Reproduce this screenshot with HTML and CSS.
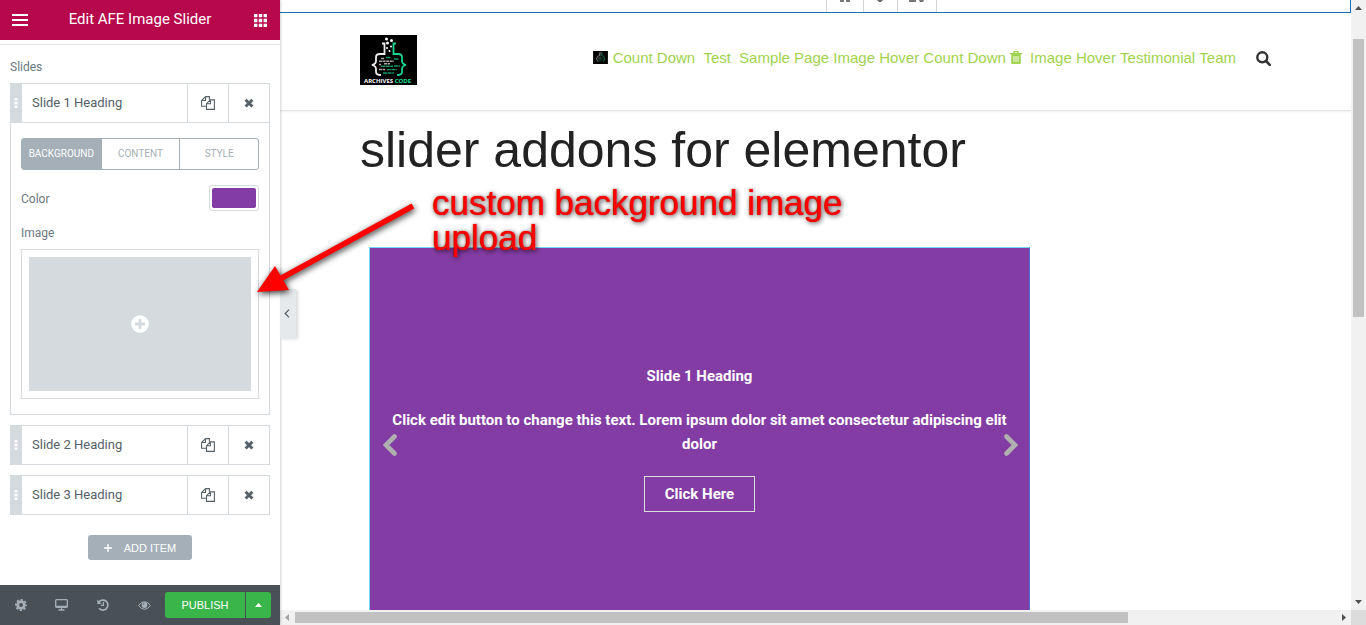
FILE: index.html
```html
<!DOCTYPE html>
<html lang="en">
<head>
<meta charset="utf-8">
<title>Edit AFE Image Slider</title>
<link rel="stylesheet" href="styles.css">
</head>
<body>
<svg class="symbols" aria-hidden="true">
  <symbol id="i-copy" viewBox="0 0 14 14"><path d="M4.500 .6h3.900v3.200M4.500 .6L.6 4.500v5.700h4.900M4.500 .6v3.900H.6M9.400 3.900h4v9.500H5.500V7.700zM9.400 3.900v3.800H5.500" fill="none" stroke="currentColor" stroke-width="1.100"/></symbol>
  <symbol id="i-close" viewBox="0 0 10 10"><path d="M1.600 1.700l6.800 6.800M8.400 1.700L1.600 8.500" stroke="currentColor" stroke-width="3"/></symbol>
  <symbol id="i-logo" viewBox="0 0 57 50">
    <rect width="57" height="50" fill="#000"/>
    <g fill="#fff"><circle cx="26.500" cy="4" r="1.500"/><circle cx="31.500" cy="5.500" r="1.500"/><circle cx="27.500" cy="8" r="1.500"/><circle cx="27" cy="13" r="1"/><circle cx="31" cy="11.500" r="1"/><circle cx="29.500" cy="16" r="1"/></g>
    <g fill="none" stroke-width="1.800">
      <path d="M22 8.500h2.500V19H20q-4 0-4 3v4q0 3-4 4 4 1 4 4v3q0 3 5 3" stroke="#eee"/>
      <path d="M36 8.500h-2.500V19H38q4 0 4 3v4q0 3 4 4-4 1-4 4v3q0 3-5 3" stroke="#18d492"/>
    </g>
    <g fill="none" stroke-width="1.400"><path d="M21 23.500h3M19 26.300h15M19 29.500h2M24 28.700h6M19 34.500h6" stroke="#aaa" stroke-dasharray="3 .6"/><path d="M26 22.500h5M34 24h5M21 31.300h12M34 31h6M27 34.600h10M23 38h11" stroke="#0b9868" stroke-dasharray="4 .6"/></g>
  </symbol>
</svg>

<aside class="panel">
  <header class="panel-head">
    <button class="icon-btn head-btn" aria-label="Menu"><svg width="16" height="12" viewBox="0 0 16 12"><path d="M0 1h16M0 6h16M0 11h16" stroke="currentColor" stroke-width="2"/></svg></button>
    <h1 class="panel-title">Edit AFE Image Slider</h1>
    <button class="icon-btn head-btn" aria-label="Widgets"><svg width="13" height="13" viewBox="0 0 13 13"><path d="M0 1.500h13M0 6.500h13M0 11.500h13" stroke="currentColor" stroke-width="3.400" stroke-dasharray="3.400 1.400"/></svg></button>
  </header>
  <main class="panel-body">
    <h2 class="label slides-label">Slides</h2>
    <div class="slides">
      <section class="slide">
        <div class="slide-row">
          <span class="grip"><svg width="4" height="10" viewBox="0 0 4 10"><path d="M2 0v10" stroke="currentColor" stroke-width="3" stroke-dasharray="2.500 1.200"/></svg></span>
          <button class="slide-name">Slide 1 Heading</button>
          <button class="icon-btn tool" aria-label="Duplicate"><svg width="14" height="14"><use href="#i-copy"/></svg></button>
          <button class="icon-btn tool" aria-label="Remove"><svg width="10" height="10"><use href="#i-close"/></svg></button>
        </div>
        <div class="slide-content">
          <div class="tabs">
            <button class="tab tab-active">BACKGROUND</button>
            <button class="tab">CONTENT</button>
            <button class="tab">STYLE</button>
          </div>
          <div class="field">
            <label class="label" for="bg-color">Color</label>
            <input class="swatch" id="bg-color" type="color" value="#833ca3">
          </div>
          <div class="label image-label" id="image-label">Image</div>
          <button class="upload" aria-labelledby="image-label"><span class="upload-area"><svg width="18" height="18" viewBox="0 0 18 18"><circle cx="9" cy="9" r="8.800" fill="#fff"/><path d="M9 4v10M4 9h10" stroke="#d5dadf" stroke-width="2.800"/></svg></span></button>
        </div>
      </section>
      <section class="slide">
        <div class="slide-row">
          <span class="grip"><svg width="4" height="10" viewBox="0 0 4 10"><path d="M2 0v10" stroke="currentColor" stroke-width="3" stroke-dasharray="2.500 1.200"/></svg></span>
          <button class="slide-name">Slide 2 Heading</button>
          <button class="icon-btn tool" aria-label="Duplicate"><svg width="14" height="14"><use href="#i-copy"/></svg></button>
          <button class="icon-btn tool" aria-label="Remove"><svg width="10" height="10"><use href="#i-close"/></svg></button>
        </div>
      </section>
      <section class="slide">
        <div class="slide-row">
          <span class="grip"><svg width="4" height="10" viewBox="0 0 4 10"><path d="M2 0v10" stroke="currentColor" stroke-width="3" stroke-dasharray="2.500 1.200"/></svg></span>
          <button class="slide-name">Slide 3 Heading</button>
          <button class="icon-btn tool" aria-label="Duplicate"><svg width="14" height="14"><use href="#i-copy"/></svg></button>
          <button class="icon-btn tool" aria-label="Remove"><svg width="10" height="10"><use href="#i-close"/></svg></button>
        </div>
      </section>
    </div>
    <button class="add-item"><svg width="8" height="8" viewBox="0 0 8 8"><path d="M4 0v8M0 4h8" stroke="currentColor" stroke-width="1.400"/></svg>ADD ITEM</button>
  </main>
  <footer class="panel-foot">
    <button class="icon-btn foot-btn" aria-label="Settings"><svg width="12" height="12" viewBox="0 0 12 12"><g fill="none" stroke="currentColor"><circle cx="6" cy="6" r="3.300" stroke-width="2.800"/><circle cx="6" cy="6" r="5.100" stroke-width="1.800" stroke-dasharray="2.200 1.805" stroke-dashoffset="1.100"/></g></svg></button>
    <button class="icon-btn foot-btn" aria-label="Responsive mode"><svg width="13" height="12" viewBox="0 0 13 12"><path d="M1.500 .7h10q.8 0 .8.800v6q0 .8-.8.800h-10q-.8 0-.8-.8v-6q0-.8.800-.8zM.7 7.500h11.600M6.500 8v3M3.500 11h6" fill="none" stroke="currentColor" stroke-width="1.300"/></svg></button>
    <button class="icon-btn foot-btn" aria-label="History"><svg width="12" height="12" viewBox="0 0 12 12"><path d="M1.800 3.200A5 5 0 1 1 2 9.200" fill="none" stroke="currentColor" stroke-width="1.700"/><path d="M.3.600v4.300h4.300z" fill="currentColor"/><path d="M6.400 3v3.400H4" fill="none" stroke="currentColor" stroke-width="1.200"/></svg></button>
    <button class="icon-btn foot-btn" aria-label="Preview"><svg width="13" height="9" viewBox="0 0 13 9"><path d="M.6 4.500Q3 .7 6.500.700t5.900 3.800Q10 8.300 6.500 8.300T.6 4.500z" fill="none" stroke="currentColor"/><circle cx="6.500" cy="4" r="2.900" fill="currentColor"/><path d="M4.900 3.800q.1-1.400 1.500-1.500" fill="none" stroke="#495157" stroke-width=".7"/></svg></button>
    <div class="publish-group">
      <button class="publish">PUBLISH</button>
      <button class="publish-more" aria-label="Save options"><svg width="7" height="4" viewBox="0 0 7 4"><path d="M0 4l3.500-4L7 4z" fill="currentColor"/></svg></button>
    </div>
  </footer>
  <button class="icon-btn collapse" aria-label="Hide panel"><svg width="6" height="9" viewBox="0 0 6 9"><path d="M5 .6L1.200 4.500 5 8.400" fill="none" stroke="currentColor" stroke-width="1.300"/></svg></button>
</aside>

<div class="preview">
  <div class="page">
    <div class="section-edge">
      <div class="section-tools">
        <span class="edge-tool"><svg width="14" height="3" viewBox="0 0 14 3"><path d="M2 0h4v2H2zM8 0h4v2H8z" fill="#777"/></svg></span>
        <span class="edge-tool"><svg width="11" height="3" viewBox="0 0 11 3"><path d="M2 0h6L6 2H4z" fill="#666"/></svg></span>
        <span class="edge-tool"><svg width="16" height="3" viewBox="0 0 16 3"><path d="M0 0h7v2H0zM10 0h5l-1 2h-3z" fill="#777"/></svg></span>
      </div>
    </div>
    <header class="site-head">
      <a href="#" aria-label="Archives Code"><svg class="logo" width="57" height="50" viewBox="0 0 57 50"><use href="#i-logo"/><text class="logo-text" x="4" y="48" fill="#fff">ARCHIVES <tspan fill="#18e09b">CODE</tspan></text></svg></a>
      <nav class="nav">
        <a href="#"><svg class="nav-thumb" width="15" height="13" viewBox="0 0 57 50"><use href="#i-logo"/></svg>Count Down</a>
        <a class="spaced" href="#">Test</a>
        <a class="spaced" href="#">Sample Page</a>
        <a href="#">Image Hover</a>
        <a href="#">Count Down</a>
        <a href="#"><svg class="nav-trash" width="12" height="13" viewBox="0 0 12 13"><path d="M4 2V.7h4V2M0 2.700h12" fill="none" stroke="currentColor" stroke-width="1.300"/><path d="M1.200 3h9.600v9q0 1-1 1H2.200q-1 0-1-1z" fill="currentColor"/><path d="M4 5v6M6 5v6M8 5v6" stroke="#fff" stroke-width=".9"/></svg>Image Hover</a>
        <a href="#">Testimonial</a>
        <a href="#">Team</a>
      </nav>
      <button class="icon-btn search" aria-label="Search"><svg width="15" height="15" viewBox="0 0 15 15"><circle cx="6.300" cy="6.300" r="5" fill="none" stroke="currentColor" stroke-width="2.400"/><path d="M10 10l3.800 3.800" stroke="currentColor" stroke-width="2.600" stroke-linecap="round"/></svg></button>
    </header>
    <div class="content">
      <h2 class="page-title">slider addons for elementor</h2>
      <section class="slider">
        <h3 class="slider-heading">Slide 1 Heading</h3>
        <p class="slider-text">Click edit button to change this text. Lorem ipsum dolor sit amet consectetur adipiscing elit dolor</p>
        <a class="slider-cta" href="#">Click Here</a>
        <button class="icon-btn arrow arrow-prev" aria-label="Previous"><svg width="14" height="22" viewBox="0 0 14 22"><path d="M11.500 2.500L3 11l8.500 8.500" fill="none" stroke="currentColor" stroke-width="4.600" stroke-linecap="round"/></svg></button>
        <button class="icon-btn arrow arrow-next" aria-label="Next"><svg width="14" height="22" viewBox="0 0 14 22"><path d="M2.500 2.500L11 11l-8.500 8.500" fill="none" stroke="currentColor" stroke-width="4.600" stroke-linecap="round"/></svg></button>
      </section>
    </div>
  </div>
  <div class="bar bar-v">
    <svg class="bar-end" viewBox="0 0 15 15"><path d="M4 10l3.500-4 3.500 4z" fill="#505050"/></svg>
    <div class="track"><div class="thumb-v"></div></div>
    <svg class="bar-end" viewBox="0 0 15 15"><path d="M4 5l3.500 4L11 5z" fill="#505050"/></svg>
  </div>
  <div class="bar bar-h">
    <svg class="bar-end" viewBox="0 0 15 15"><path d="M9 4L5 7.500 9 11z" fill="#a3a3a3"/></svg>
    <div class="track"><div class="thumb-h"></div></div>
    <svg class="bar-end" viewBox="0 0 15 15"><path d="M6 4l4 3.500L6 11z" fill="#505050"/></svg>
  </div>
  <div class="corner"></div>
</div>

<p class="note">custom background image upload</p>
<svg class="pointer" width="180" height="110" viewBox="0 0 180 110" aria-hidden="true"><path d="M163 16L28 90" stroke="#f00" stroke-width="5.500"/><path d="M7 102l18-26 14 24z" fill="#f00"/></svg>
</body>
</html>
```
FILE: styles.css
```css
* { box-sizing: border-box; }

body {
  position: relative;
  display: grid;
  grid-template-columns: 280px minmax(0, 1fr);
  height: 100vh;
  margin: 0;
  overflow: hidden;
  background: #fff;
  font-family: Roboto, sans-serif;
}

h1, h2, h3, p { margin: 0; font-weight: 400; }
a { color: inherit; text-decoration: none; }
button { margin: 0; padding: 0; border: 0; background: none; color: inherit; font: inherit; cursor: pointer; }
svg { display: block; flex: none; }
.symbols { position: absolute; width: 0; height: 0; }
.icon-btn { display: flex; align-items: center; justify-content: center; }

/* Editor panel */
.panel {
  position: relative;
  z-index: 2;
  display: flex;
  flex-direction: column;
  min-height: 0;
  background: #fff;
  color: #556068;
  box-shadow: 0 0 3px rgba(0, 0, 0, .3);
}
.panel-head { display: flex; align-items: center; height: 40px; background: #b7084b; color: #fff; }
.head-btn { width: 40px; height: 40px; }
.panel-title { flex: 1; padding-bottom: 2px; text-align: center; font-size: 15px; line-height: 20px; }
.panel-body { flex: 1; min-height: 0; margin-top: 4px; padding: 14px 10px 0; border-top: 1px solid #e6e9ec; }
.label { color: #6d7882; font-size: 12px; line-height: 16px; }
.slides-label { margin-bottom: 8px; }
.slides { display: grid; gap: 10px; }
.slide-row { display: flex; height: 40px; border: 1px solid #d5dadf; border-left: 0; }
.grip { display: flex; align-items: center; justify-content: center; width: 12px; background: #d5dadf; color: #fff; }
.slide-name { flex: 1; padding: 0 0 2px 10px; text-align: left; font-size: 13px; }
.tool { width: 41px; border-left: 1px solid #d5dadf; }
.slide-content { padding: 15px 10px; border: 1px solid #d5dadf; border-top: 0; }
.tabs { display: grid; grid-template-columns: repeat(3, minmax(0, 1fr)); height: 32px; border: 1px solid #a4afb7; border-radius: 3px; }
.tab { padding-bottom: 2px; color: #a4afb7; font-size: 10px; }
.tab + .tab { border-left: 1px solid #a4afb7; }
.tab-active { background: #a4afb7; color: #fff; }
.field { display: flex; align-items: center; justify-content: space-between; margin-top: 15px; }
.field .label { padding-top: 2px; }
.swatch { width: 50px; height: 26px; padding: 2px; border: 1px solid #d5dadf; border-radius: 3px; background: #fff; }
.swatch::-webkit-color-swatch-wrapper { padding: 0; }
.swatch::-webkit-color-swatch { border: 0; border-radius: 2px; }
.image-label { margin: 14px 0 8px; }
.upload { display: flex; width: 100%; height: 150px; padding: 7px; border: 1px solid #d5dadf; }
.upload-area { display: flex; flex: 1; align-items: center; justify-content: center; align-self: stretch; background: #d5dadf; }
.add-item {
  display: flex;
  align-items: center;
  gap: 12px;
  height: 25px;
  margin: 20px auto 0;
  padding: 0 16px;
  border-radius: 3px;
  background: #a4afb7;
  color: #fff;
  font: 11px "Liberation Sans", sans-serif;
}
.panel-foot { display: flex; align-items: center; height: 40px; padding-right: 9px; background: #495157; color: #a4afb7; }
.foot-btn { flex: 1; height: 40px; }
.publish-group { display: flex; gap: 1px; height: 26px; color: #fff; }
.publish { width: 80px; border-radius: 3px 0 0 3px; background: #39b54a; font: 11px "Liberation Sans", sans-serif; }
.publish-more { display: flex; align-items: center; justify-content: center; width: 25px; border-radius: 0 3px 3px 0; background: #39b54a; }
.collapse {
  position: absolute;
  top: 289px;
  left: 100%;
  width: 16px;
  height: 49px;
  padding-right: 2px;
  background: #e6e9ec;
  box-shadow: 2px 1px 3px rgba(0, 0, 0, .15);
}

/* Page preview */
.preview { display: grid; grid-template: minmax(0, 1fr) 15px / minmax(0, 1fr) 15px; min-height: 0; }
.page { display: flex; flex-direction: column; min-height: 0; overflow: hidden; font-family: "Liberation Sans", sans-serif; }
.section-edge { display: flex; justify-content: center; height: 13px; flex: none; padding-left: 132px; border: solid #1b6fb5; border-width: 0 1px 1px 0; }
.section-tools { display: flex; border-left: 1px solid #d5d5d5; }
.edge-tool { display: flex; justify-content: center; padding: 0 11px; border-right: 1px solid #d5d5d5; }
.site-head {
  display: flex;
  align-items: center;
  flex: none;
  height: 98px;
  padding: 0 80px;
  border-bottom: 1px solid #e3e3e3;
  box-shadow: 0 1px 2px rgba(0, 0, 0, .06);
}
.logo { margin-bottom: 4px; }
.logo-text { font: 700 6px "Open Sans", sans-serif; }
.nav { margin-left: auto; margin-bottom: 8px; color: #9fd34e; font-size: 15px; line-height: 20px; white-space: nowrap; }
.nav a { display: inline-block; }
.nav svg { display: inline-block; }
.nav .spaced { padding-left: 4px; }
.nav-thumb { margin-right: 5px; vertical-align: -1px; }
.nav-trash { margin-right: 8px; vertical-align: -1px; }
.search { margin: 0 0 6px 20px; color: #333; }
.content { display: flex; flex: 1; flex-direction: column; min-height: 0; padding: 9px 80px 0; }
.page-title { margin-bottom: 67px; color: #222; font-size: 50px; line-height: 60px; }
.slider {
  position: relative;
  display: flex;
  flex: 1;
  flex-direction: column;
  align-items: center;
  gap: 20px;
  max-width: 661px;
  margin-left: 9px;
  padding: 116px 20px 0;
  border: 1px solid #71d7f7;
  border-right-color: #3f73cf;
  border-bottom: 0;
  background: #833ca3;
  color: #fff;
  font: 700 15px/24px Roboto, sans-serif;
  text-align: center;
}
.slider-heading { font-size: 15px; font-weight: 700; }
.slider-text { font-weight: 700; }
.slider-cta { padding: 5px 20px; border: 1px solid #ddd; }
.arrow { position: absolute; top: 186px; color: #b0b0b0; }
.arrow-prev { left: 13px; }
.arrow-next { right: 11px; }

/* Scrollbars */
.bar { display: flex; background: #f1f1f1; }
.bar-v { flex-direction: column; }
.bar-end { width: 15px; height: 15px; }
.track { display: flex; flex: 1; }
.bar-v .track { flex-direction: column; padding: 24px 2px 0; }
.bar-h .track { padding: 2px 0; }
.thumb-v { height: 50%; background: #c1c1c1; }
.thumb-h { width: 80%; background: #c1c1c1; }
.corner { background: #dcdcdc; }

/* Annotation over the page */
.note {
  position: absolute;
  z-index: 3;
  top: 185px;
  left: 432px;
  width: 440px;
  color: #f00;
  font: 35px/35px "Liberation Sans", sans-serif;
  text-shadow: 1px 1px 5px rgba(0, 0, 0, .8), 0 0 1px #f00;
}
.pointer { position: absolute; z-index: 3; top: 190px; left: 250px; filter: drop-shadow(1px 2px 3px rgba(0, 0, 0, .8)); pointer-events: none; }
```
